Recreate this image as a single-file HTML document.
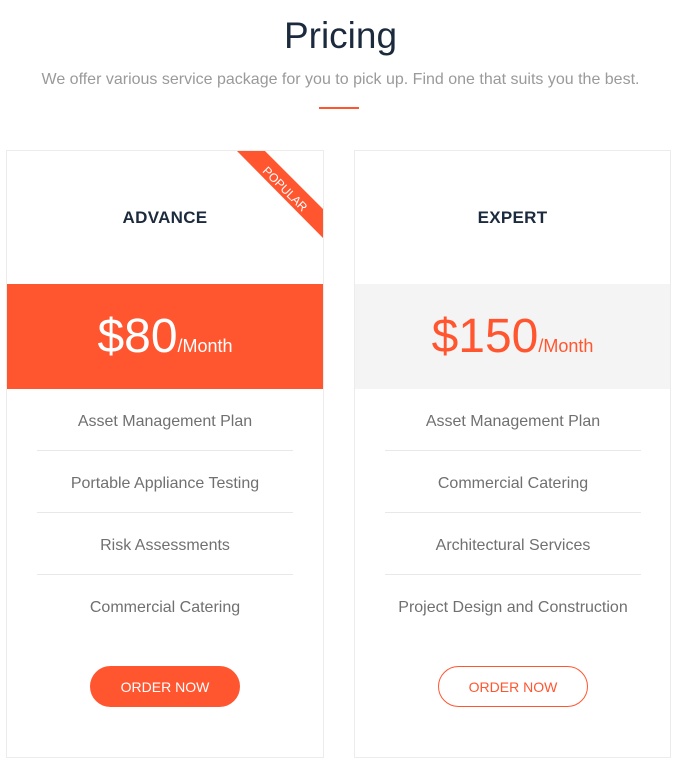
<!DOCTYPE html>
<html><head><style>
*{margin:0;padding:0;box-sizing:border-box}
body{width:681px;height:765px;background:#fff;font-family:"Liberation Sans",sans-serif;position:relative;overflow:hidden}
h1{position:absolute;top:15px;width:100%;text-align:center;font-weight:normal;font-size:37px;color:#1c2a3e}
.sub{position:absolute;top:71px;width:100%;text-align:center;font-size:16px;color:#9a9a9a}
.bar{position:absolute;left:319px;top:107px;width:40px;height:2px;background:#ff5630}
.card{position:absolute;top:150px;width:318px;height:608px;border:1px solid #ececec;overflow:hidden}
.name{position:absolute;top:57px;width:100%;text-align:center;font-weight:bold;font-size:17px;color:#1c2a3e;letter-spacing:0.3px}
.price{position:absolute;top:133px;left:0;width:100%;height:105px;text-align:center;padding-top:28px;font-size:48px;line-height:50px}
.price small{font-size:18px}
.f{position:absolute;left:30px;width:256px;text-align:center;font-size:16px;color:#707070;height:62px;line-height:66px;border-bottom:1px solid #e8e8e8}
.btn{position:absolute;left:83px;top:515px;width:150px;height:41px;border-radius:21px;text-align:center;line-height:41px;font-size:14px;border:1px solid #ff5630}
.rib{position:absolute;left:0;top:0}
.rt{position:absolute;left:248px;top:31px;width:60px;text-align:center;transform:rotate(45deg);color:#fff;font-size:12px}
</style></head><body>
<h1>Pricing</h1>
<div class="sub">We offer various service package for you to pick up. Find one that suits you the best.</div>
<div class="bar"></div>

<div class="card" style="left:6px">
<svg class="rib" width="318" height="100"><polygon points="230,0,258,0,317,59,317,88" fill="#ff5630"/></svg>
<div class="rt">POPULAR</div>
<div class="name">ADVANCE</div>
<div class="price" style="background:#ff5630;color:#fff">$80<small>/Month</small></div>
<div class="f" style="top:238px">Asset Management Plan</div>
<div class="f" style="top:300px">Portable Appliance Testing</div>
<div class="f" style="top:362px">Risk Assessments</div>
<div class="f" style="top:424px;border:none">Commercial Catering</div>
<div class="btn" style="background:#ff5630;color:#fff">ORDER NOW</div>
</div>

<div class="card" style="left:354px;width:317px">
<div class="name">EXPERT</div>
<div class="price" style="background:#f4f4f4;color:#ff5630">$150<small>/Month</small></div>
<div class="f" style="top:238px">Asset Management Plan</div>
<div class="f" style="top:300px">Commercial Catering</div>
<div class="f" style="top:362px">Architectural Services</div>
<div class="f" style="top:424px;border:none">Project Design and Construction</div>
<div class="btn" style="background:#fff;color:#ff5630">ORDER NOW</div>
</div>
</body></html>
